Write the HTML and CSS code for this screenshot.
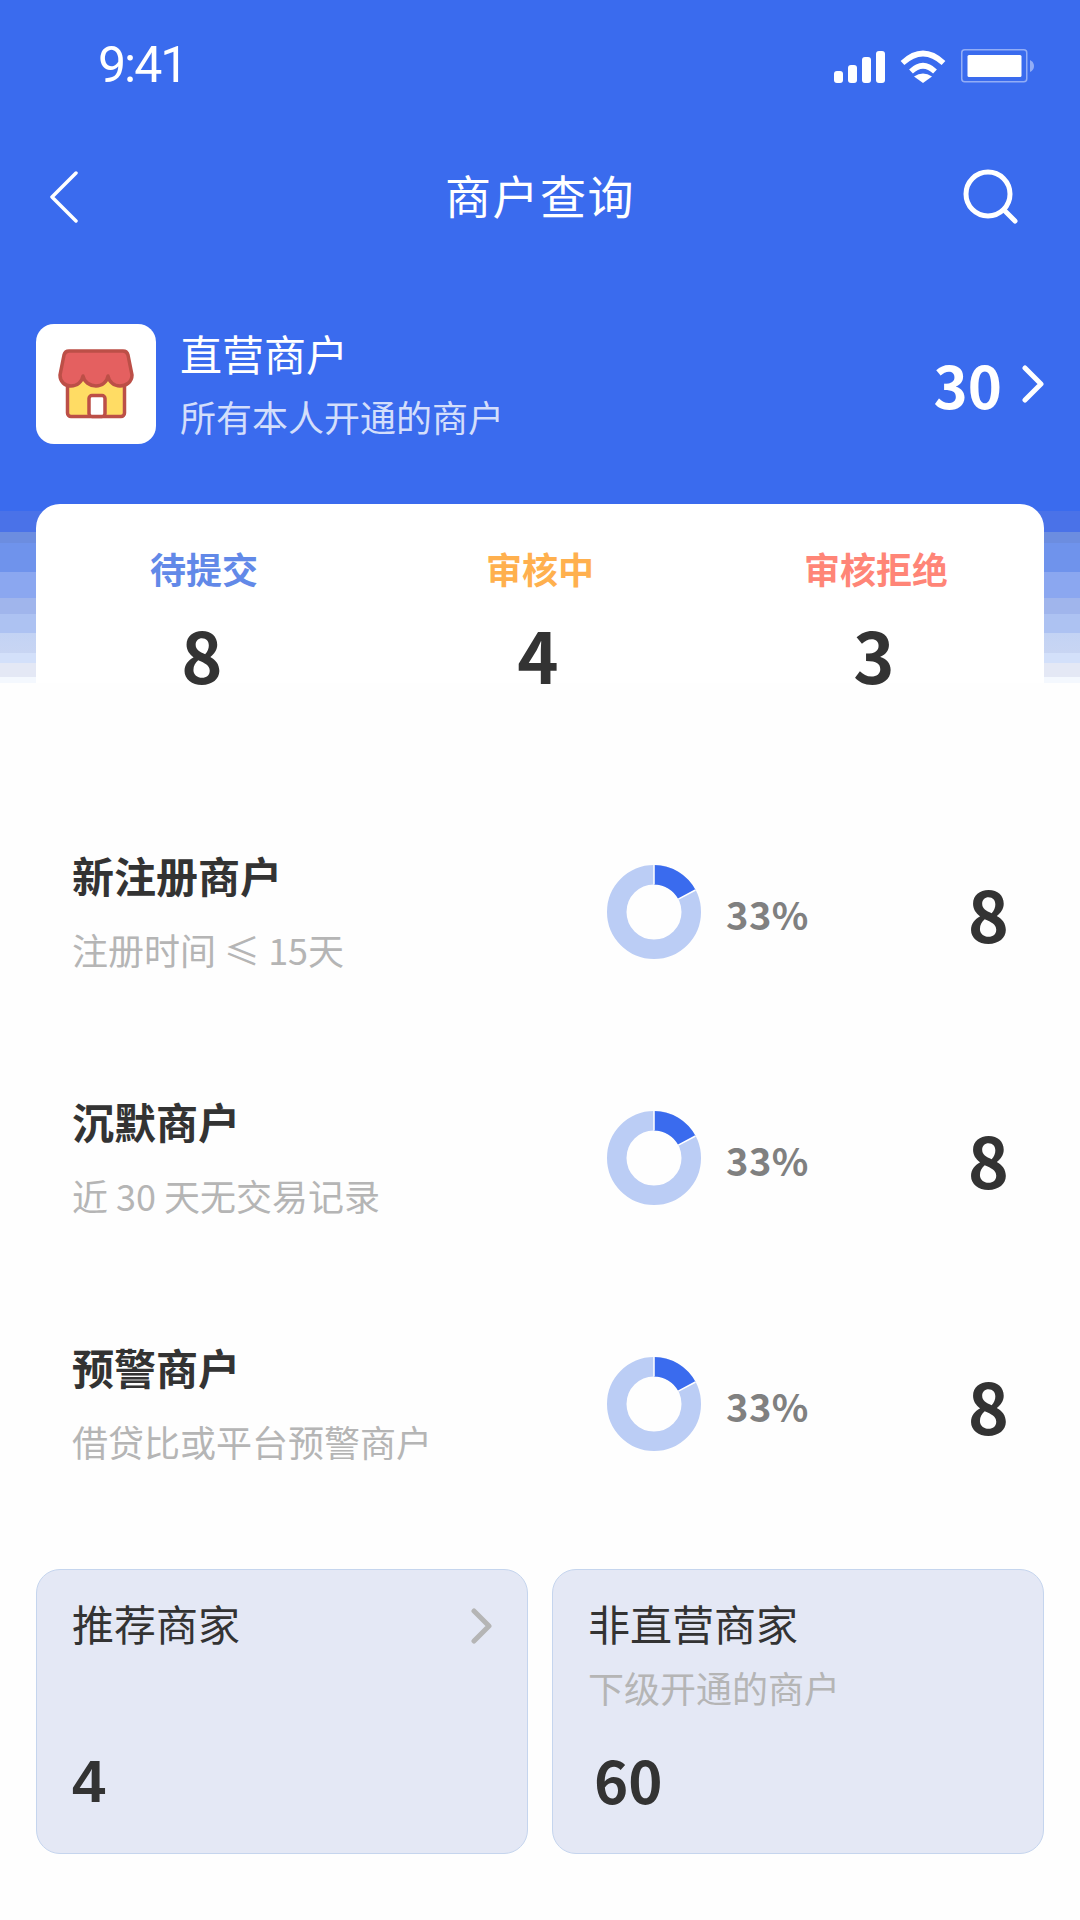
FILE: index.html
```html
<!DOCTYPE html>
<html lang="zh-CN">
<head>
<meta charset="utf-8">
<title>商户查询</title>
<link rel="stylesheet" href="styles.css">
</head>
<body>
<div class="page">
  <header class="hero">
    <div class="status">
      <span class="time">9:41</span>
      <div class="status-icons">
        <svg class="i-signal" viewBox="0 0 51 32" width="51" height="32"><g fill="#fff"><rect x="0" y="20" width="9" height="12" rx="3"/><rect x="14" y="14" width="9" height="18" rx="3"/><rect x="28" y="6" width="9" height="26" rx="3"/><rect x="42" y="0" width="9" height="32" rx="3"/></g></svg>
        <svg class="i-wifi" viewBox="0 0 46 33" width="46" height="33"><g fill="none" stroke="#fff" stroke-width="5.500"><path d="M2.500 13 Q23 -6 43.500 13"/><path d="M11 21.500 Q23 10 35 21.500"/></g><path d="M23 33 L14 26.500 Q23 20.500 32 26.500 Z" fill="#fff"/></svg>
        <svg class="i-battery" viewBox="0 0 73 34" width="73" height="34"><rect x="0.750" y="0.750" width="65" height="32" rx="3" fill="none" stroke="#fff" stroke-opacity=".45" stroke-width="1.500"/><rect x="6.500" y="6" width="54" height="22" rx="1.500" fill="#fff"/><path d="M69 11 Q73 13 73 17 Q73 21 69 23 Z" fill="#fff" fill-opacity=".45"/></svg>
      </div>
    </div>
    <nav class="nav">
      <svg class="i-back" viewBox="0 0 30 52" width="30" height="52"><path d="M27 2 L3 26 L27 50" fill="none" stroke="#fff" stroke-width="3.500" stroke-linecap="round" stroke-linejoin="round"/></svg>
      <h1 class="nav-title">商户查询</h1>
      <svg class="i-search" viewBox="0 0 56 56" width="56" height="56"><circle cx="25" cy="25" r="22" fill="none" stroke="#fff" stroke-width="5"/><path d="M41 41 L52 52" stroke="#fff" stroke-width="5" stroke-linecap="round"/></svg>
    </nav>
    <section class="merchant">
      <div class="store-box">
        <svg viewBox="0 0 76 70" width="76" height="70"><rect x="9.500" y="20" width="57" height="47.500" rx="3.500" fill="#ffdc64" stroke="#bc4f47" stroke-width="3.500"/><rect x="31" y="46.500" width="16" height="21" rx="3" fill="#fff" stroke="#bc4f47" stroke-width="3.500"/><path d="M11 2 H65 Q69 2 70 6 L74 26 C74 33 68 37 62 37 C56 37 51 33 50 27 C49 33 44 37 38 37 C32 37 26 33 25 27 C24 33 19 37 13 37 C7 37 2 33 2 26 L6 6 Q7 2 11 2 Z" fill="#e46060" stroke="#bc4f47" stroke-width="3.500" stroke-linejoin="round"/></svg>
      </div>
      <div class="merchant-text">
        <div class="merchant-name">直营商户</div>
        <div class="merchant-sub">所有本人开通的商户</div>
      </div>
      <div class="merchant-total">
        <span class="merchant-count">30</span>
        <svg viewBox="0 0 22 38" width="22" height="38"><path d="M3 3 L19 19 L3 35" fill="none" stroke="#fff" stroke-width="5" stroke-linecap="round" stroke-linejoin="round"/></svg>
      </div>
    </section>
    <section class="summary">
      <div class="summary-cell"><div class="summary-label label-blue">待提交</div><div class="summary-num">8</div></div>
      <div class="summary-cell"><div class="summary-label label-orange">审核中</div><div class="summary-num">4</div></div>
      <div class="summary-cell"><div class="summary-label label-red">审核拒绝</div><div class="summary-num">3</div></div>
    </section>
  </header>

  <main class="rows">
    <div class="row">
      <div class="row-text"><div class="row-title">新注册商户</div><div class="row-sub">注册时间 ≤ 15天</div></div>
      <svg class="donut" viewBox="0 0 94 94" width="94" height="94"><circle cx="47" cy="47" r="37.250" fill="none" stroke="#bbcdf5" stroke-width="19.500"/><path d="M47 0 A47 47 0 0 1 88.500 25 L71.300 34.100 A27.500 27.500 0 0 0 47 19.500 Z" fill="#3a6bee"/><path d="M47 19.500 V0 M71.300 34.100 L88.500 25" stroke="#fff" stroke-width="1.500"/></svg>
      <div class="row-pct">33%</div>
      <div class="row-num">8</div>
    </div>
    <div class="row">
      <div class="row-text"><div class="row-title">沉默商户</div><div class="row-sub">近 30 天无交易记录</div></div>
      <svg class="donut" viewBox="0 0 94 94" width="94" height="94"><circle cx="47" cy="47" r="37.250" fill="none" stroke="#bbcdf5" stroke-width="19.500"/><path d="M47 0 A47 47 0 0 1 88.500 25 L71.300 34.100 A27.500 27.500 0 0 0 47 19.500 Z" fill="#3a6bee"/><path d="M47 19.500 V0 M71.300 34.100 L88.500 25" stroke="#fff" stroke-width="1.500"/></svg>
      <div class="row-pct">33%</div>
      <div class="row-num">8</div>
    </div>
    <div class="row">
      <div class="row-text"><div class="row-title">预警商户</div><div class="row-sub">借贷比或平台预警商户</div></div>
      <svg class="donut" viewBox="0 0 94 94" width="94" height="94"><circle cx="47" cy="47" r="37.250" fill="none" stroke="#bbcdf5" stroke-width="19.500"/><path d="M47 0 A47 47 0 0 1 88.500 25 L71.300 34.100 A27.500 27.500 0 0 0 47 19.500 Z" fill="#3a6bee"/><path d="M47 19.500 V0 M71.300 34.100 L88.500 25" stroke="#fff" stroke-width="1.500"/></svg>
      <div class="row-pct">33%</div>
      <div class="row-num">8</div>
    </div>
  </main>

  <section class="cards">
    <div class="card">
      <div class="card-head">
        <div class="card-title">推荐商家</div>
        <svg class="card-chev" viewBox="0 0 22 36" width="22" height="36"><path d="M3 3 L18 18 L3 33" fill="none" stroke="#b5b5b5" stroke-width="5" stroke-linecap="round" stroke-linejoin="round"/></svg>
      </div>
      <div class="card-num card-num-arial">4</div>
    </div>
    <div class="card">
      <div class="card-title">非直营商家</div>
      <div class="card-sub">下级开通的商户</div>
      <div class="card-num card-num-shift">60</div>
    </div>
  </section>
</div>
</body>
</html>
```

FILE: styles.css
```css
* { box-sizing: border-box; }
html, body { margin: 0; padding: 0; }
body {
  width: 1080px;
  height: 1920px;
  overflow: hidden;
  background: #fefefe;
  font-family: "Noto Sans CJK SC", "Noto Sans", sans-serif;
  color: #333;
}
.page { width: 1080px; height: 1920px; }

.hero {
  height: 683px;
  padding-top: 48px;
  background: linear-gradient(to bottom,
    #3a6bee 0, #3a6bee 511px,
    #4a72e8 511px, #4a72e8 532px,
    #6c8de0 532px, #6c8de0 543px,
    #6f93ec 543px, #6f93ec 572px,
    #8ba7f0 572px, #8ba7f0 598px,
    #a0b5ec 598px, #a0b5ec 614px,
    #adc2f2 614px, #adc2f2 633px,
    #c3d3f4 633px, #c8d5f3 653px,
    #d3e0fa 653px, #d3e0fa 663px,
    #e4e8f5 663px, #e4e8f5 677px,
    #f4f8fe 677px, #f4f8fe 683px);
}
.status {
  height: 34px;
  margin-bottom: 87px;
  padding: 0 46px 0 98px;
  display: flex;
  align-items: center;
  justify-content: space-between;
}
.time {
  font-family: Roboto, sans-serif;
  font-weight: 400;
  font-size: 50px;
  line-height: 34px;
  letter-spacing: -2px;
  color: #fff;
}
.status-icons { display: flex; align-items: flex-end; gap: 15px; padding-top: 1px; }

.nav {
  height: 56px;
  padding: 0 61px;
  display: grid;
  grid-template-columns: 1fr auto 1fr;
  align-items: center;
}
.i-back { margin-left: -12px; }
.i-search { justify-self: end; }
.nav-title {
  margin: 0;
  padding-bottom: 6px;
  font-size: 46px;
  font-weight: 400;
  line-height: 50px;
  letter-spacing: 1.500px;
  color: #fff;
}

.merchant {
  margin-top: 99px;
  height: 120px;
  padding: 0 36px;
  display: flex;
  align-items: center;
  color: #fff;
}
.store-box {
  width: 120px;
  height: 120px;
  border-radius: 18px;
  background: #fff;
  display: flex;
  align-items: center;
  justify-content: center;
}
.merchant-text { flex: 1; margin-left: 24px; }
.merchant-name { font-size: 42px; line-height: 52px; }
.merchant-sub { margin-top: 12px; font-size: 36px; line-height: 50px; color: rgba(255, 255, 255, .78); }
.merchant-total { display: flex; align-items: center; gap: 20px; }
.merchant-count { font-size: 58px; font-weight: 700; line-height: 64px; }

.summary {
  margin: 60px 36px 0;
  height: 179px;
  padding-top: 41px;
  border-radius: 24px 24px 0 0;
  background: #fff;
  display: grid;
  grid-template-columns: repeat(3, 1fr);
  text-align: center;
}
.summary-label { font-size: 36px; font-weight: 700; line-height: 46px; }
.label-blue { color: #6289e8; }
.label-orange { color: #ffb04e; }
.label-red { color: #ff8577; }
.summary-num { margin-top: 27px; padding-right: 4px; font-size: 70px; font-weight: 700; line-height: 72px; color: #333; }

.rows { padding-top: 105px; }
.row {
  height: 246px;
  padding: 0 71px 0 72px;
  display: flex;
  align-items: center;
}
.row-text { width: 535px; padding-bottom: 3px; }
.row-title { font-size: 42px; font-weight: 700; line-height: 52px; color: #333; }
.row-sub { margin-top: 26px; font-size: 36px; line-height: 44px; color: #b5b5b5; }
.donut { margin-top: 1px; }
.row-pct { margin-left: 25px; padding-top: 6px; font-size: 38px; font-weight: 700; line-height: 50px; letter-spacing: 0.500px; color: #808080; }
.row-num { margin-left: auto; padding-top: 4px; font-size: 70px; font-weight: 700; line-height: 80px; color: #333; }

.cards {
  margin-top: 43px;
  padding: 0 36px;
  display: grid;
  grid-template-columns: 492px 492px;
  column-gap: 24px;
}
.card {
  height: 285px;
  padding: 26px 35px 0;
  border: 1px solid #c5d5ee;
  border-radius: 24px;
  background: #e4e8f5;
}
.card-head { display: flex; align-items: flex-start; justify-content: space-between; }
.card-chev { margin: 12px -1px 0 0; }
.card-title { font-size: 42px; line-height: 54px; color: #333; }
.card-sub { margin-top: 12px; font-size: 36px; line-height: 50px; color: #b5b5b5; }
.card-num { font-size: 58px; font-weight: 700; line-height: 64px; color: #333; margin-top: 35px; }
.card-num-arial { margin-top: 100px; font-size: 60px; font-family: "Liberation Sans", sans-serif; }
.card-num-shift { margin-left: 6px; }
```
